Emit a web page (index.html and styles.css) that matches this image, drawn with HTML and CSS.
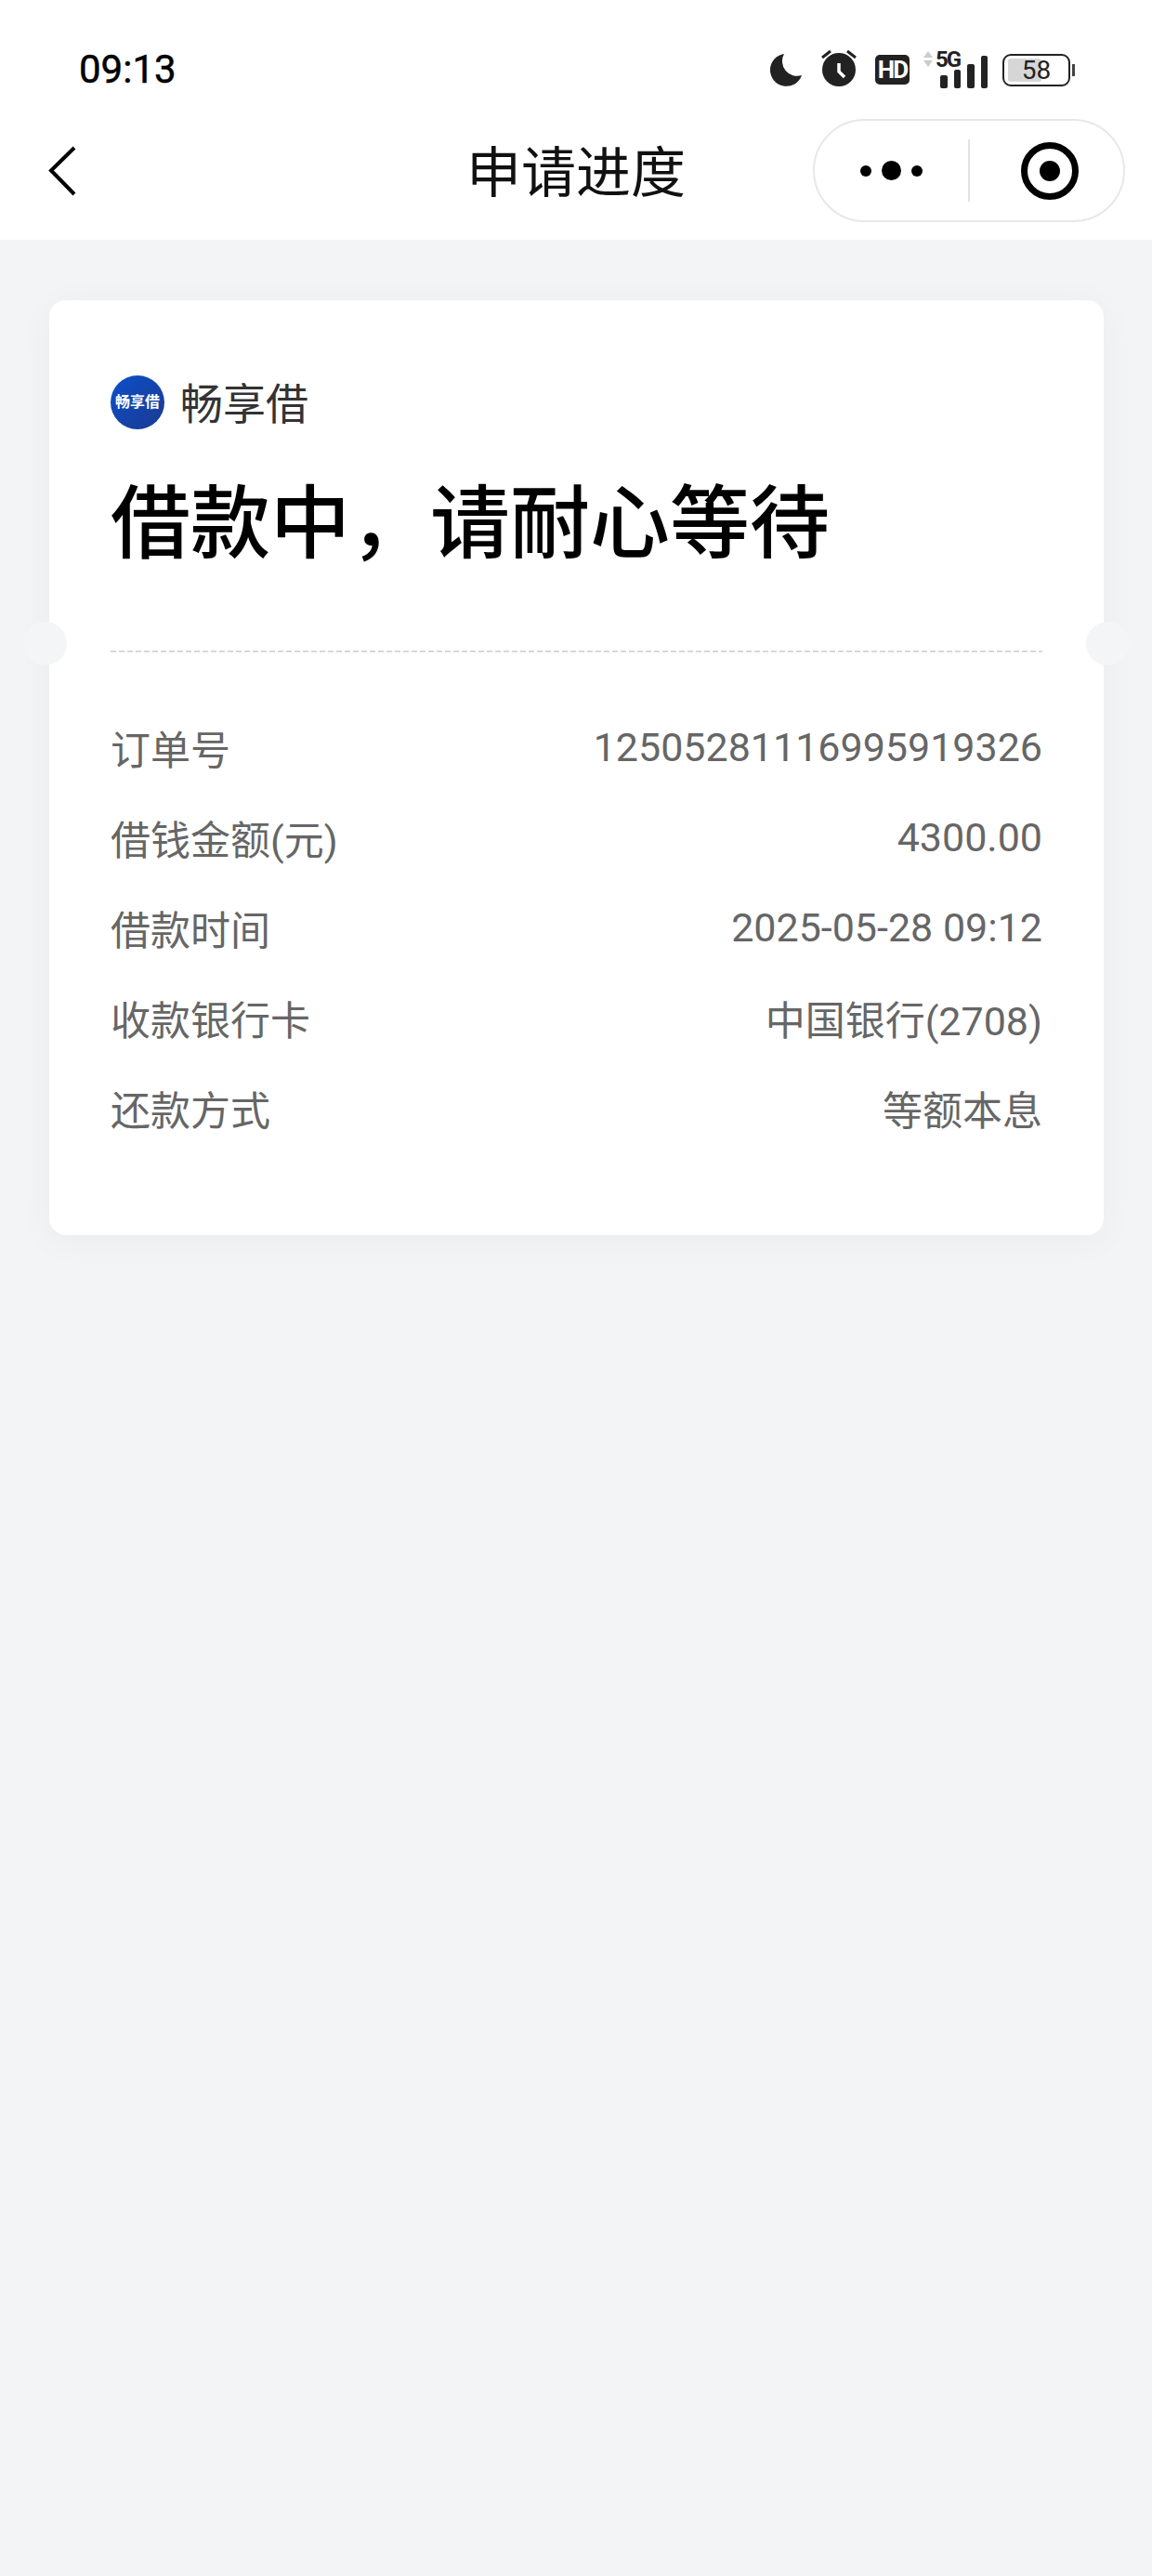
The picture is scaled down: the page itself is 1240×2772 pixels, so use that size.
FILE: index.html
```html
<!DOCTYPE html>
<html lang="zh-CN">
<head>
    <meta charset="UTF-8">
    <meta name="viewport" content="width=device-width, initial-scale=1.0">
    <title>申请进度</title>
    <link rel="stylesheet" href="styles.css">
</head>
<body>
    <header class="top-bar">
        <div class="status-bar">
            <span class="time">09:13</span>
            <div class="status-icons">
                <svg class="icon-moon" width="36" height="36" viewBox="0 0 36 36"><path d="M16 1 A17.500 17.500 0 1 0 35 24 A16 16 0 0 1 16 1 Z" fill="#222"/></svg>
                <svg class="icon-alarm" width="38" height="40" viewBox="0 0 38 40">
                    <circle cx="19" cy="22" r="18" fill="#222"/>
                    <path d="M1 9 L10 2 M37 9 L28 2" stroke="#222" stroke-width="3"/>
                    <path d="M19 15 L19 24 L25 30" stroke="#fff" stroke-width="3.500" fill="none"/>
                </svg>
                <span class="hd">HD</span>
                <div class="signal">
                    <svg class="signal-arrows" width="12" height="18" viewBox="0 0 12 18"><path d="M6 0 L11 7 L1 7 Z M1 10 L11 10 L6 17 Z" fill="#ccc"/></svg>
                    <span class="five-g">5G</span>
                    <div class="bars">
                        <i style="height: 14px"></i>
                        <i style="height: 20px"></i>
                        <i style="height: 26px"></i>
                        <i style="height: 35px"></i>
                    </div>
                </div>
                <div class="battery">
                    <div class="battery-body">
                        <div class="battery-fill"></div>
                        <span class="battery-num">58</span>
                    </div>
                    <div class="battery-tip"></div>
                </div>
            </div>
        </div>
        <nav class="nav-bar">
            <svg class="back" width="32" height="56" viewBox="0 0 32 56"><path d="M28 3 L3 27.500 L28 53" fill="none" stroke="#000" stroke-width="4"/></svg>
            <h1 class="nav-title">申请进度</h1>
            <div class="capsule">
                <div class="dots"><i></i><b></b><i></i></div>
                <div class="capsule-line"></div>
                <div class="target"></div>
            </div>
        </nav>
    </header>

    <main class="content">
        <section class="card">
            <div class="card-top">
                <div class="brand">
                    <div class="logo">畅享借</div>
                    <span class="brand-name">畅享借</span>
                </div>
                <h2 class="status-title">借款中，请耐心等待</h2>
            </div>
            <div class="divider"></div>
            <div class="rows">
                <div class="row"><span class="label">订单号</span><span class="value value-num">12505281116995919326</span></div>
                <div class="row"><span class="label">借钱金额(元)</span><span class="value value-num">4300.00</span></div>
                <div class="row"><span class="label">借款时间</span><span class="value value-num">2025-05-28 09:12</span></div>
                <div class="row"><span class="label">收款银行卡</span><span class="value">中国银行(2708)</span></div>
                <div class="row"><span class="label">还款方式</span><span class="value">等额本息</span></div>
            </div>
        </section>
    </main>
</body>
</html>
```

FILE: styles.css
```css
html, body {
    margin: 0;
    padding: 0;
}
body {
    height: 2772px;
    overflow: hidden;
    display: flex;
    flex-direction: column;
    background-color: #f3f4f6;
    font-family: Roboto, "Noto Sans CJK SC", sans-serif;
}
.top-bar {
    height: 258px;
    box-sizing: border-box;
    background-color: #fff;
}
.status-bar {
    height: 128px;
    box-sizing: border-box;
    padding: 50px 83px 0 85px;
    display: flex;
    justify-content: space-between;
    align-items: flex-start;
}
.time {
    font-size: 42px;
    line-height: 50px;
    color: #000;
    -webkit-text-stroke: 0.5px #000;
}
.status-icons {
    display: flex;
    align-items: center;
    height: 50px;
}
.icon-alarm {
    margin-left: 20px;
    margin-top: -4px;
}
.hd {
    margin-left: 20px;
    width: 37px;
    height: 32px;
    border-radius: 5px;
    background-color: #222;
    color: #fff;
    font-size: 26px;
    font-weight: 700;
    line-height: 32px;
    text-align: center;
    letter-spacing: -2px;
}
.signal {
    margin-left: 14px;
    width: 68px;
    height: 40px;
    position: relative;
}
.signal-arrows {
    position: absolute;
    left: 0;
    top: 0;
}
.five-g {
    position: absolute;
    left: 14px;
    top: -5px;
    font-size: 24px;
    line-height: 28px;
    font-weight: 700;
    color: #222;
    letter-spacing: -2px;
}
.bars {
    position: absolute;
    left: 19px;
    bottom: 0;
    display: flex;
    align-items: flex-end;
    gap: 7px;
}
.bars i {
    width: 7.500px;
    background-color: #222;
    border-radius: 2px;
}
.battery {
    margin-left: 18px;
    display: flex;
    align-items: center;
    gap: 2px;
}
.battery-body {
    width: 73px;
    height: 35px;
    box-sizing: border-box;
    border: 2px solid #222;
    border-radius: 9px;
    position: relative;
    overflow: hidden;
}
.battery-fill {
    position: absolute;
    left: 4px;
    top: 3px;
    bottom: 3px;
    width: 36px;
    background-color: #d6d6d6;
    border-radius: 3px;
}
.battery-num {
    position: absolute;
    left: 0;
    right: 0;
    top: 0;
    font-size: 28px;
    line-height: 31px;
    text-align: center;
    color: #222;
}
.battery-tip {
    width: 3px;
    height: 13px;
    background-color: #444;
}
.nav-bar {
    height: 130px;
    box-sizing: border-box;
    padding: 0 29px 19px;
    display: grid;
    grid-template-columns: 1fr auto 1fr;
    align-items: center;
}
.back {
    display: block;
    margin-left: 23px;
}
.nav-title {
    margin: 7px 0 0;
    font-size: 59px;
    line-height: 70px;
    font-weight: 400;
    color: #111;
}
.capsule {
    justify-self: end;
    width: 336px;
    height: 111px;
    box-sizing: border-box;
    border: 2px solid #e8e8e8;
    border-radius: 56px;
    display: flex;
    align-items: center;
    background-color: #fff;
}
.dots {
    width: 165px;
    display: flex;
    justify-content: center;
    align-items: center;
    gap: 11px;
}
.dots i {
    width: 12px;
    height: 12px;
    border-radius: 50%;
    background-color: #000;
}
.dots b {
    width: 21px;
    height: 21px;
    border-radius: 50%;
    background-color: #000;
}
.capsule-line {
    width: 2px;
    height: 67px;
    background-color: #e2e2e2;
}
.target {
    margin-left: 55px;
    width: 62px;
    height: 62px;
    box-sizing: border-box;
    border: 7px solid #000;
    border-radius: 50%;
    position: relative;
}
.target::after {
    content: "";
    position: absolute;
    left: 50%;
    top: 50%;
    width: 22px;
    height: 22px;
    margin: -11px 0 0 -11px;
    border-radius: 50%;
    background-color: #000;
}
.content {
    flex: 1;
    padding: 65px 52px 0 53px;
}
.card {
    height: 1006px;
    box-sizing: border-box;
    padding: 81px 66px 0;
    background-color: #fff;
    border-radius: 18px;
    box-shadow: 0 6px 40px rgba(0, 0, 0, 0.04);
    position: relative;
}
.card::before, .card::after {
    content: "";
    position: absolute;
    top: 346px;
    width: 47px;
    height: 47px;
    border-radius: 50%;
    background-color: #f4f5f7;
}
.card::before {
    left: -28px;
}
.card::after {
    right: -28px;
}
.brand {
    display: flex;
    align-items: center;
    gap: 17px;
    height: 58px;
}
.logo {
    width: 58px;
    height: 58px;
    border-radius: 50%;
    background: linear-gradient(135deg, #0d4fc9, #1a3a8f);
    color: #fff;
    font-size: 16px;
    font-weight: 700;
    line-height: 58px;
    text-align: center;
    white-space: nowrap;
}
.brand-name {
    padding-top: 4px;
    font-size: 46px;
    line-height: 58px;
    color: #333;
}
.status-title {
    margin: 48px 0 0;
    font-size: 86px;
    line-height: 110px;
    font-weight: 500;
    color: #000;
}
.divider {
    margin-top: 80px;
    height: 2px;
    background: repeating-linear-gradient(90deg, #d8d8d8 0 6px, transparent 6px 9px);
}
.rows {
    margin-top: 76px;
    display: flex;
    flex-direction: column;
    gap: 37px;
}
.row {
    height: 60px;
    display: flex;
    justify-content: space-between;
    align-items: flex-start;
    font-size: 43px;
    line-height: 60px;
    color: #666;
}
.value-num {
    margin-top: -4px;
}
```
